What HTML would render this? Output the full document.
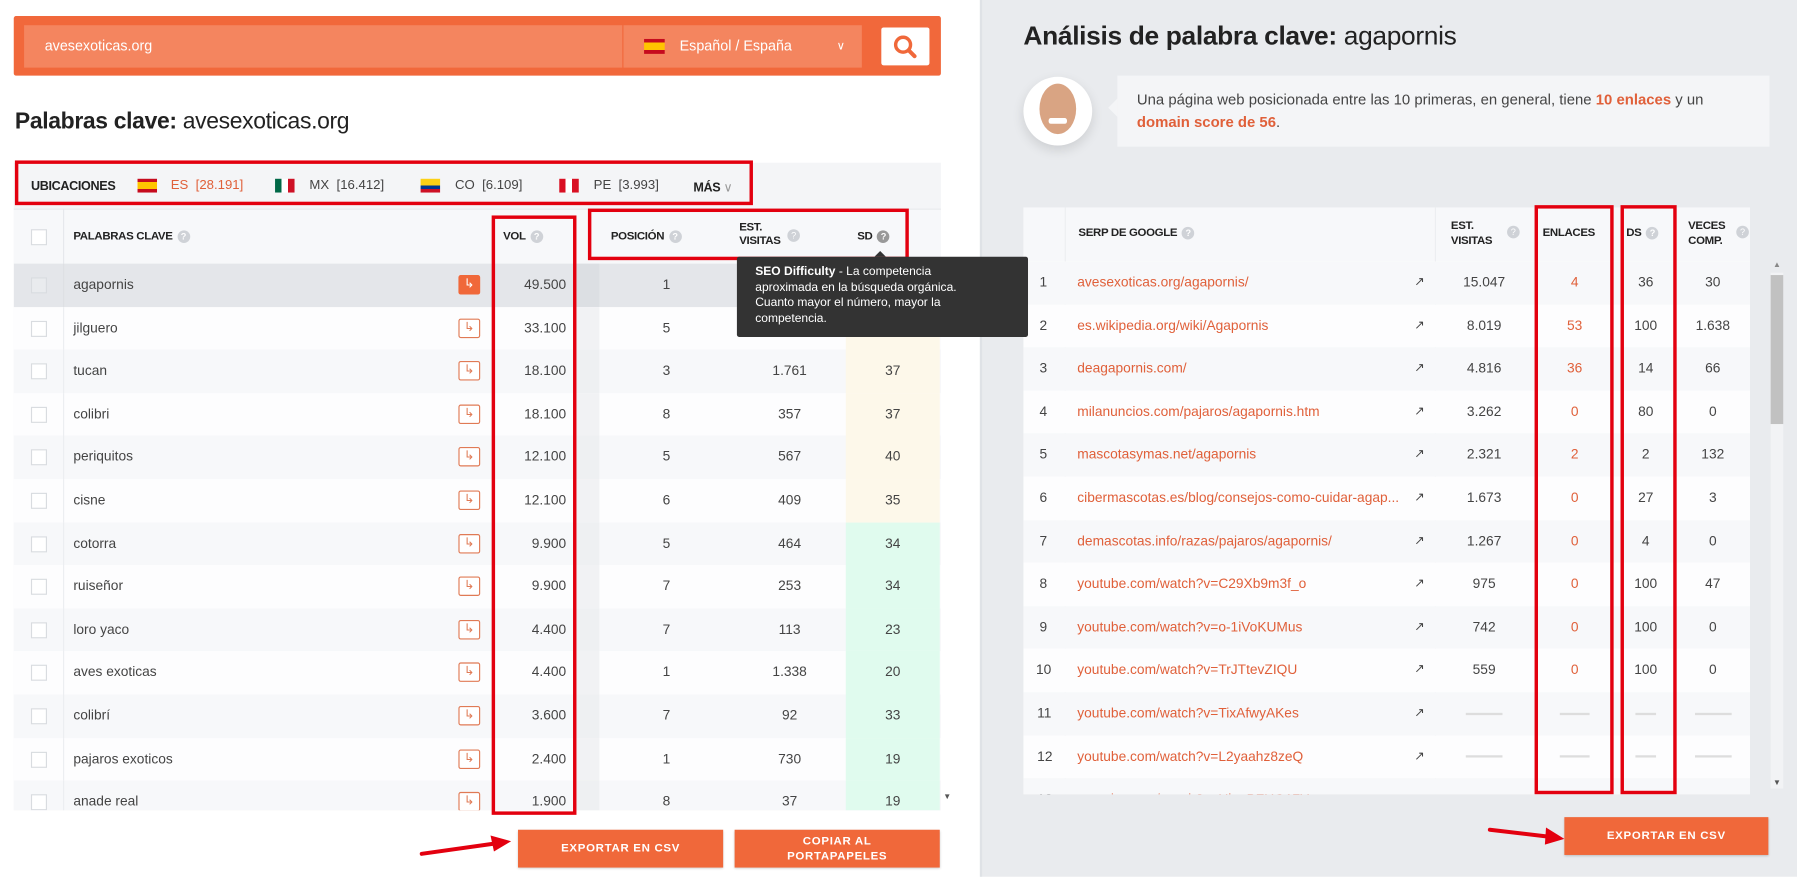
<!DOCTYPE html>
<html><head><meta charset="utf-8">
<style>
*{box-sizing:border-box;margin:0;padding:0}
html,body{width:1797px;height:877px;overflow:hidden;background:#fff}
#w{position:absolute;left:0;top:0;width:1568px;height:765px;transform:scale(1.14605);transform-origin:0 0;font-family:"Liberation Sans",sans-serif;color:#333;background:#fff}
.a{position:absolute}
.red{position:absolute;border:3px solid #e3000f;z-index:5}
.q{display:inline-block;width:11px;height:11px;border-radius:50%;background:#cfd2d7;color:#fff;font-size:8px;line-height:11px;text-align:center;vertical-align:middle;margin-left:4px}
.hdr{font-size:10px;font-weight:bold;color:#222;letter-spacing:-.3px}
.row{position:absolute;height:37.6px;font-size:12px;color:#444}
.row>div{position:absolute;top:0;height:100%;line-height:37.6px}
.cb{left:15px;width:14px;height:14px!important;top:12px!important;border:1px solid #d9dce0;background:#fff}
.ic{width:19px;height:17px!important;top:10px!important;border:1px solid #e07a55;border-radius:2px;color:#e07a55;font-size:11px;line-height:15px!important;text-align:center;background:#fff}
.btn{position:absolute;background:#f0683a;color:#fff;font-weight:bold;font-size:10px;letter-spacing:.6px;text-align:center;box-shadow:0 1px 2px rgba(0,0,0,.2)}
.lk{color:#e0603a}
.dash{display:inline-block;width:26px;height:2px;background:#ddd;vertical-align:middle}
</style></head><body><div id="w">
<div class="a" style="left:855px;top:0;width:713px;height:765px;background:#e9ebee;border-left:2px solid #dfe2e6"></div>

<div class="a" style="left:12px;top:14px;width:809px;height:52px;background:#f1683b;border-radius:2px"></div>
<div class="a" style="left:21px;top:22px;width:522px;height:37px;background:#f4855f"></div>
<div class="a" style="left:39px;top:22px;line-height:37px;color:#fff;font-size:12.5px">avesexoticas.org</div>
<div class="a" style="left:544px;top:22px;width:208px;height:37px;background:#f4855f"></div>
<div class="a" style="left:562px;top:34px;width:18px;height:13px;background:linear-gradient(#c60b1e 25%,#ffc400 25%,#ffc400 75%,#c60b1e 75%)"></div>
<div class="a" style="left:593px;top:22px;line-height:37px;color:#fff;font-size:12.5px">Español / España</div>
<div class="a" style="left:730px;top:22px;line-height:37px;color:#fff;font-size:10px">&#8744;</div>
<div class="a" style="left:769px;top:24px;width:42px;height:33px;background:#fff;border-radius:2px"></div>
<svg class="a" style="left:778px;top:29px" width="24" height="24" viewBox="0 0 24 24"><circle cx="10" cy="10" r="6.5" fill="none" stroke="#f0683a" stroke-width="3"/><line x1="15" y1="15" x2="20" y2="20" stroke="#f0683a" stroke-width="3.5" stroke-linecap="round"/></svg>

<div class="a" style="left:13px;top:95px;font-size:20px;color:#222;letter-spacing:-.3px"><b>Palabras clave:</b> avesexoticas.org</div>

<div class="a" style="left:12px;top:142px;width:809px;height:565px;background:#f4f5f7"></div>
<div class="a hdr" style="left:27px;top:157px;font-size:11px">UBICACIONES</div>
<div class="a" style="left:120px;top:156px;width:17px;height:12px;background:linear-gradient(#c60b1e 25%,#ffc400 25%,#ffc400 75%,#c60b1e 75%)"></div>
<div class="a" style="left:149px;top:156px;font-size:11.5px;color:#e0603a">ES&nbsp; [28.191]</div>
<div class="a" style="left:240px;top:156px;width:17px;height:12px;background:linear-gradient(90deg,#006847 33%,#fff 33%,#fff 66%,#ce1126 66%)"></div>
<div class="a" style="left:270px;top:156px;font-size:11.5px;color:#444">MX&nbsp; [16.412]</div>
<div class="a" style="left:367px;top:156px;width:17px;height:12px;background:linear-gradient(#fcd116 50%,#003893 50%,#003893 75%,#ce1126 75%)"></div>
<div class="a" style="left:397px;top:156px;font-size:11.5px;color:#444">CO&nbsp; [6.109]</div>
<div class="a" style="left:488px;top:156px;width:17px;height:12px;background:linear-gradient(90deg,#d91023 33%,#fff 33%,#fff 66%,#d91023 66%)"></div>
<div class="a" style="left:518px;top:156px;font-size:11.5px;color:#444">PE&nbsp; [3.993]</div>
<div class="a hdr" style="left:605px;top:157px;font-size:11px">MÁS <span style="font-weight:normal;color:#999">&#8744;</span></div>

<div class="a" style="left:12px;top:182px;width:809px;height:48px;background:#f7f8fa;border-top:1px solid #e8eaed"></div>
<div class="a" style="left:27px;top:200px;width:14px;height:14px;border:1px solid #d9dce0;background:#fff"></div>
<div class="a" style="left:55px;top:182px;width:1px;height:48px;background:#e6e8eb"></div>
<div class="a hdr" style="left:64px;top:201px">PALABRAS CLAVE<span class="q">?</span></div>
<div class="a hdr" style="left:439px;top:201px">VOL<span class="q">?</span></div>
<div class="a hdr" style="left:533px;top:201px">POSICIÓN<span class="q">?</span></div>
<div class="a hdr" style="left:645px;top:193px;line-height:12px">EST.<br>VISITAS</div><span class="q a" style="left:683px;top:200px">?</span>
<div class="a hdr" style="left:748px;top:201px">SD<span class="q" style="background:#999">?</span></div>

<div class="a" style="left:12px;top:230px;width:809px;height:477px;overflow:hidden">
<div style="position:relative;left:-12px;top:-230px">
<div class="row" style="left:12px;top:230px;width:809px;background:#e4e6ea"><div class="cb" style="background:#e9ebee"></div><div style="left:43px;width:1px;background:#dde0e4"></div><div style="left:52px">agapornis</div><div class="ic" style="left:388px;background:#f0683a;color:#fff;border-color:#f0683a">&#8627;</div><div style="left:418px;width:64px;text-align:right">49.500</div><div style="left:488px;width:23px;background:#dcdfe3"></div><div style="left:511px;width:117px;text-align:center">1</div><div style="left:628px;width:98px;text-align:center">15.047</div><div style="left:726px;width:82px;text-align:center;background:#dcdfe3">47</div></div>
<div class="row" style="left:12px;top:267.6px;width:809px;background:#fdfdfe"><div class="cb"></div><div style="left:43px;width:1px;background:#eceef1"></div><div style="left:52px">jilguero</div><div class="ic" style="left:388px">&#8627;</div><div style="left:418px;width:64px;text-align:right">33.100</div><div style="left:488px;width:23px;background:#f1f2f4"></div><div style="left:511px;width:117px;text-align:center">5</div><div style="left:628px;width:98px;text-align:center">1.352</div><div style="left:726px;width:82px;text-align:center;background:#fdf8ea">41</div></div>
<div class="row" style="left:12px;top:305.2px;width:809px;background:#f7f8fa"><div class="cb"></div><div style="left:43px;width:1px;background:#eceef1"></div><div style="left:52px">tucan</div><div class="ic" style="left:388px">&#8627;</div><div style="left:418px;width:64px;text-align:right">18.100</div><div style="left:488px;width:23px;background:#eef0f2"></div><div style="left:511px;width:117px;text-align:center">3</div><div style="left:628px;width:98px;text-align:center">1.761</div><div style="left:726px;width:82px;text-align:center;background:#fdf8ea">37</div></div>
<div class="row" style="left:12px;top:342.8px;width:809px;background:#fdfdfe"><div class="cb"></div><div style="left:43px;width:1px;background:#eceef1"></div><div style="left:52px">colibri</div><div class="ic" style="left:388px">&#8627;</div><div style="left:418px;width:64px;text-align:right">18.100</div><div style="left:488px;width:23px;background:#f1f2f4"></div><div style="left:511px;width:117px;text-align:center">8</div><div style="left:628px;width:98px;text-align:center">357</div><div style="left:726px;width:82px;text-align:center;background:#fdf8ea">37</div></div>
<div class="row" style="left:12px;top:380.4px;width:809px;background:#f7f8fa"><div class="cb"></div><div style="left:43px;width:1px;background:#eceef1"></div><div style="left:52px">periquitos</div><div class="ic" style="left:388px">&#8627;</div><div style="left:418px;width:64px;text-align:right">12.100</div><div style="left:488px;width:23px;background:#eef0f2"></div><div style="left:511px;width:117px;text-align:center">5</div><div style="left:628px;width:98px;text-align:center">567</div><div style="left:726px;width:82px;text-align:center;background:#fdf8ea">40</div></div>
<div class="row" style="left:12px;top:418px;width:809px;background:#fdfdfe"><div class="cb"></div><div style="left:43px;width:1px;background:#eceef1"></div><div style="left:52px">cisne</div><div class="ic" style="left:388px">&#8627;</div><div style="left:418px;width:64px;text-align:right">12.100</div><div style="left:488px;width:23px;background:#f1f2f4"></div><div style="left:511px;width:117px;text-align:center">6</div><div style="left:628px;width:98px;text-align:center">409</div><div style="left:726px;width:82px;text-align:center;background:#fdf8ea">35</div></div>
<div class="row" style="left:12px;top:455.6px;width:809px;background:#f7f8fa"><div class="cb"></div><div style="left:43px;width:1px;background:#eceef1"></div><div style="left:52px">cotorra</div><div class="ic" style="left:388px">&#8627;</div><div style="left:418px;width:64px;text-align:right">9.900</div><div style="left:488px;width:23px;background:#eef0f2"></div><div style="left:511px;width:117px;text-align:center">5</div><div style="left:628px;width:98px;text-align:center">464</div><div style="left:726px;width:82px;text-align:center;background:#e0fbee">34</div></div>
<div class="row" style="left:12px;top:493.2px;width:809px;background:#fdfdfe"><div class="cb"></div><div style="left:43px;width:1px;background:#eceef1"></div><div style="left:52px">ruiseñor</div><div class="ic" style="left:388px">&#8627;</div><div style="left:418px;width:64px;text-align:right">9.900</div><div style="left:488px;width:23px;background:#f1f2f4"></div><div style="left:511px;width:117px;text-align:center">7</div><div style="left:628px;width:98px;text-align:center">253</div><div style="left:726px;width:82px;text-align:center;background:#e0fbee">34</div></div>
<div class="row" style="left:12px;top:530.8px;width:809px;background:#f7f8fa"><div class="cb"></div><div style="left:43px;width:1px;background:#eceef1"></div><div style="left:52px">loro yaco</div><div class="ic" style="left:388px">&#8627;</div><div style="left:418px;width:64px;text-align:right">4.400</div><div style="left:488px;width:23px;background:#eef0f2"></div><div style="left:511px;width:117px;text-align:center">7</div><div style="left:628px;width:98px;text-align:center">113</div><div style="left:726px;width:82px;text-align:center;background:#e0fbee">23</div></div>
<div class="row" style="left:12px;top:568.4px;width:809px;background:#fdfdfe"><div class="cb"></div><div style="left:43px;width:1px;background:#eceef1"></div><div style="left:52px">aves exoticas</div><div class="ic" style="left:388px">&#8627;</div><div style="left:418px;width:64px;text-align:right">4.400</div><div style="left:488px;width:23px;background:#f1f2f4"></div><div style="left:511px;width:117px;text-align:center">1</div><div style="left:628px;width:98px;text-align:center">1.338</div><div style="left:726px;width:82px;text-align:center;background:#e0fbee">20</div></div>
<div class="row" style="left:12px;top:606px;width:809px;background:#f7f8fa"><div class="cb"></div><div style="left:43px;width:1px;background:#eceef1"></div><div style="left:52px">colibrí</div><div class="ic" style="left:388px">&#8627;</div><div style="left:418px;width:64px;text-align:right">3.600</div><div style="left:488px;width:23px;background:#eef0f2"></div><div style="left:511px;width:117px;text-align:center">7</div><div style="left:628px;width:98px;text-align:center">92</div><div style="left:726px;width:82px;text-align:center;background:#e0fbee">33</div></div>
<div class="row" style="left:12px;top:643.6px;width:809px;background:#fdfdfe"><div class="cb"></div><div style="left:43px;width:1px;background:#eceef1"></div><div style="left:52px">pajaros exoticos</div><div class="ic" style="left:388px">&#8627;</div><div style="left:418px;width:64px;text-align:right">2.400</div><div style="left:488px;width:23px;background:#f1f2f4"></div><div style="left:511px;width:117px;text-align:center">1</div><div style="left:628px;width:98px;text-align:center">730</div><div style="left:726px;width:82px;text-align:center;background:#e0fbee">19</div></div>
<div class="row" style="left:12px;top:681.2px;width:809px;background:#f7f8fa"><div class="cb"></div><div style="left:43px;width:1px;background:#eceef1"></div><div style="left:52px">anade real</div><div class="ic" style="left:388px">&#8627;</div><div style="left:418px;width:64px;text-align:right">1.900</div><div style="left:488px;width:23px;background:#eef0f2"></div><div style="left:511px;width:117px;text-align:center">8</div><div style="left:628px;width:98px;text-align:center">37</div><div style="left:726px;width:82px;text-align:center;background:#e0fbee">19</div></div>
</div></div>
<div class="a" style="left:821px;top:230px;width:12px;height:477px;background:#fff"></div>
<div class="a" style="left:823px;top:692px;font-size:7px;color:#555">&#9660;</div>

<div class="a" style="left:643px;top:224px;width:254px;height:70px;background:#333;border-radius:2px;color:#fff;font-size:10.5px;line-height:13.5px;padding:7px 30px 0 16px;z-index:6"><b>SEO Difficulty</b> - La competencia aproximada en la búsqueda orgánica. Cuanto mayor el número, mayor la competencia.</div>
<div class="a" style="left:763px;top:219px;width:0;height:0;border-left:5px solid transparent;border-right:5px solid transparent;border-bottom:5px solid #333;z-index:6"></div>

<div class="red" style="left:13px;top:140px;width:644px;height:39px"></div>
<div class="red" style="left:429px;top:188px;width:74px;height:523px"></div>
<div class="red" style="left:513px;top:182px;width:280px;height:45px"></div>

<div class="btn" style="left:452px;top:724px;width:179px;height:33px;line-height:33px">EXPORTAR EN CSV</div>
<div class="btn" style="left:641px;top:724px;width:179px;height:33px;line-height:13px;padding-top:4px">COPIAR AL<br>PORTAPAPELES</div>
<svg class="a" style="left:366px;top:728px" width="82" height="22" viewBox="0 0 82 22"><line x1="2" y1="17" x2="66" y2="8" stroke="#e3000f" stroke-width="3.5" stroke-linecap="round"/><polygon points="80,6 62,1 65,15" fill="#e3000f"/></svg>

<div class="a" style="left:893px;top:18px;font-size:23px;color:#222;letter-spacing:-.3px"><b>Análisis de palabra clave:</b> agapornis</div>
<div class="a" style="left:893px;top:67px;width:60px;height:60px;border-radius:50%;background:#fff;box-shadow:0 4px 10px rgba(0,0,0,.12);overflow:hidden"><div style="position:absolute;left:14px;top:6px;width:32px;height:44px;border-radius:50%;background:#d9a483"></div><div style="position:absolute;left:22px;top:36px;width:16px;height:5px;background:#fff;border-radius:2px"></div></div>
<div class="a" style="left:975px;top:66px;width:569px;height:62px;background:#f4f5f7;font-size:13px;line-height:20px;color:#444;padding:11px 50px 0 17px">Una página web posicionada entre las 10 primeras, en general, tiene <b class="lk">10 enlaces</b> y un <b class="lk">domain score de 56</b>.</div>
<div class="a" style="left:967px;top:86px;width:0;height:0;border-top:8px solid transparent;border-bottom:8px solid transparent;border-right:8px solid #f4f5f7"></div>

<div class="a" style="left:893px;top:181px;width:634px;height:512px;background:#fff;overflow:hidden">
<div style="position:absolute;left:0;top:0;width:634px;height:47px;background:#f7f8fa"></div>
<div style="position:absolute;left:36px;top:0;width:1px;height:512px;background:#eceef1"></div>
<div style="position:absolute;left:359px;top:0;width:1px;height:512px;background:#eceef1"></div>
<div class="hdr" style="position:absolute;left:48px;top:17px">SERP DE GOOGLE<span class="q">?</span></div>
<div class="hdr" style="position:absolute;left:373px;top:10px;line-height:13px">EST.<br>VISITAS</div><span class="q" style="position:absolute;left:418px;top:16px">?</span>
<div class="hdr" style="position:absolute;left:453px;top:17px">ENLACES</div>
<div class="hdr" style="position:absolute;left:526px;top:17px">DS<span class="q">?</span></div>
<div class="hdr" style="position:absolute;left:580px;top:10px;line-height:13px">VECES<br>COMP.</div><span class="q" style="position:absolute;left:618px;top:16px">?</span>
</div>
<div class="a" style="left:893px;top:228px;width:634px;height:465px;overflow:hidden;font-size:12px;color:#444">
<div style="position:relative">
<div class="row" style="top:0;width:634px;background:#f7f8fa"><div style="left:14px">1</div><div class="lk" style="left:47px">avesexoticas.org/agapornis/</div><div style="left:341px;font-size:11px">&#8599;</div><div style="left:359px;width:86px;text-align:center">15.047</div><div class="lk" style="left:445px;width:72px;text-align:center">4</div><div style="left:517px;width:52px;text-align:center">36</div><div style="left:569px;width:65px;text-align:center">30</div></div>
<div class="row" style="top:37.6px;width:634px;background:#fdfdfe"><div style="left:14px">2</div><div class="lk" style="left:47px">es.wikipedia.org/wiki/Agapornis</div><div style="left:341px;font-size:11px">&#8599;</div><div style="left:359px;width:86px;text-align:center">8.019</div><div class="lk" style="left:445px;width:72px;text-align:center">53</div><div style="left:517px;width:52px;text-align:center">100</div><div style="left:569px;width:65px;text-align:center">1.638</div></div>
<div class="row" style="top:75.2px;width:634px;background:#f7f8fa"><div style="left:14px">3</div><div class="lk" style="left:47px">deagapornis.com/</div><div style="left:341px;font-size:11px">&#8599;</div><div style="left:359px;width:86px;text-align:center">4.816</div><div class="lk" style="left:445px;width:72px;text-align:center">36</div><div style="left:517px;width:52px;text-align:center">14</div><div style="left:569px;width:65px;text-align:center">66</div></div>
<div class="row" style="top:112.8px;width:634px;background:#fdfdfe"><div style="left:14px">4</div><div class="lk" style="left:47px">milanuncios.com/pajaros/agapornis.htm</div><div style="left:341px;font-size:11px">&#8599;</div><div style="left:359px;width:86px;text-align:center">3.262</div><div class="lk" style="left:445px;width:72px;text-align:center">0</div><div style="left:517px;width:52px;text-align:center">80</div><div style="left:569px;width:65px;text-align:center">0</div></div>
<div class="row" style="top:150.4px;width:634px;background:#f7f8fa"><div style="left:14px">5</div><div class="lk" style="left:47px">mascotasymas.net/agapornis</div><div style="left:341px;font-size:11px">&#8599;</div><div style="left:359px;width:86px;text-align:center">2.321</div><div class="lk" style="left:445px;width:72px;text-align:center">2</div><div style="left:517px;width:52px;text-align:center">2</div><div style="left:569px;width:65px;text-align:center">132</div></div>
<div class="row" style="top:188px;width:634px;background:#fdfdfe"><div style="left:14px">6</div><div class="lk" style="left:47px">cibermascotas.es/blog/consejos-como-cuidar-agap...</div><div style="left:341px;font-size:11px;background:#fdfdfe">&#8599;</div><div style="left:359px;width:86px;text-align:center">1.673</div><div class="lk" style="left:445px;width:72px;text-align:center">0</div><div style="left:517px;width:52px;text-align:center">27</div><div style="left:569px;width:65px;text-align:center">3</div></div>
<div class="row" style="top:225.6px;width:634px;background:#f7f8fa"><div style="left:14px">7</div><div class="lk" style="left:47px">demascotas.info/razas/pajaros/agapornis/</div><div style="left:341px;font-size:11px">&#8599;</div><div style="left:359px;width:86px;text-align:center">1.267</div><div class="lk" style="left:445px;width:72px;text-align:center">0</div><div style="left:517px;width:52px;text-align:center">4</div><div style="left:569px;width:65px;text-align:center">0</div></div>
<div class="row" style="top:263.2px;width:634px;background:#fdfdfe"><div style="left:14px">8</div><div class="lk" style="left:47px">youtube.com/watch?v=C29Xb9m3f_o</div><div style="left:341px;font-size:11px">&#8599;</div><div style="left:359px;width:86px;text-align:center">975</div><div class="lk" style="left:445px;width:72px;text-align:center">0</div><div style="left:517px;width:52px;text-align:center">100</div><div style="left:569px;width:65px;text-align:center">47</div></div>
<div class="row" style="top:300.8px;width:634px;background:#f7f8fa"><div style="left:14px">9</div><div class="lk" style="left:47px">youtube.com/watch?v=o-1iVoKUMus</div><div style="left:341px;font-size:11px">&#8599;</div><div style="left:359px;width:86px;text-align:center">742</div><div class="lk" style="left:445px;width:72px;text-align:center">0</div><div style="left:517px;width:52px;text-align:center">100</div><div style="left:569px;width:65px;text-align:center">0</div></div>
<div class="row" style="top:338.4px;width:634px;background:#fdfdfe"><div style="left:11px">10</div><div class="lk" style="left:47px">youtube.com/watch?v=TrJTtevZIQU</div><div style="left:341px;font-size:11px">&#8599;</div><div style="left:359px;width:86px;text-align:center">559</div><div class="lk" style="left:445px;width:72px;text-align:center">0</div><div style="left:517px;width:52px;text-align:center">100</div><div style="left:569px;width:65px;text-align:center">0</div></div>
<div class="row" style="top:376px;width:634px;background:#f7f8fa"><div style="left:12px">11</div><div class="lk" style="left:47px">youtube.com/watch?v=TixAfwyAKes</div><div style="left:341px;font-size:11px">&#8599;</div><div style="left:359px;width:86px;text-align:center"><span class="dash" style="width:32px"></span></div><div style="left:445px;width:72px;text-align:center"><span class="dash"></span></div><div style="left:517px;width:52px;text-align:center"><span class="dash" style="width:18px"></span></div><div style="left:569px;width:65px;text-align:center"><span class="dash" style="width:32px"></span></div></div>
<div class="row" style="top:413.6px;width:634px;background:#fdfdfe"><div style="left:12px">12</div><div class="lk" style="left:47px">youtube.com/watch?v=L2yaahz8zeQ</div><div style="left:341px;font-size:11px">&#8599;</div><div style="left:359px;width:86px;text-align:center"><span class="dash" style="width:32px"></span></div><div style="left:445px;width:72px;text-align:center"><span class="dash"></span></div><div style="left:517px;width:52px;text-align:center"><span class="dash" style="width:18px"></span></div><div style="left:569px;width:65px;text-align:center"><span class="dash" style="width:32px"></span></div></div>
<div class="row" style="top:451.2px;width:634px;background:#f7f8fa"><div style="left:12px">13</div><div class="lk" style="left:47px">youtube.com/watch?v=Uip_BFUQ17Y</div><div style="left:341px;font-size:11px">&#8599;</div></div>
</div></div>
<div class="a" style="left:1545px;top:238px;width:11px;height:450px;background:#f2f3f5"></div>
<div class="a" style="left:1545px;top:240px;width:11px;height:130px;background:#c1c1c1"></div>
<div class="a" style="left:1547px;top:228px;font-size:7px;color:#888">&#9650;</div>
<div class="a" style="left:1547px;top:680px;font-size:7px;color:#555">&#9660;</div>

<div class="red" style="left:1339px;top:179px;width:69px;height:514px"></div>
<div class="red" style="left:1414px;top:179px;width:49px;height:514px"></div>

<div class="btn" style="left:1365px;top:713px;width:178px;height:33px;line-height:33px">EXPORTAR EN CSV</div>
<svg class="a" style="left:1297px;top:718px" width="70" height="22" viewBox="0 0 70 22"><line x1="3" y1="6" x2="54" y2="12" stroke="#e3000f" stroke-width="3.5" stroke-linecap="round"/><polygon points="68,14 52,4 51,19" fill="#e3000f"/></svg>
</div></body></html>
